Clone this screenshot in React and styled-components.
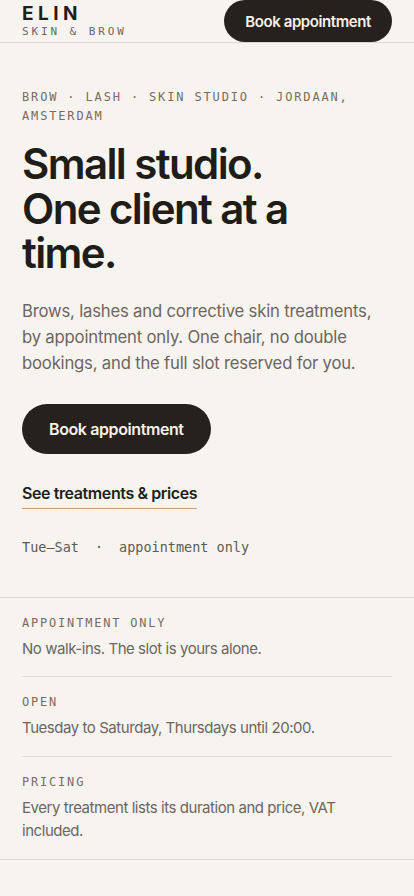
import React from 'react'
import styled, { createGlobalStyle } from 'styled-components'

const GlobalStyle = createGlobalStyle`
    * { box-sizing: border-box; }
    body {
        margin: 0;
        background: #f7f4ef;
        color: #221e1a;
        font-family: Inter, "Noto Sans", sans-serif;
        -webkit-font-smoothing: antialiased;
    }
`;

const mono = `"DejaVu Sans Mono", "Liberation Mono", monospace`;

function App() {
    const facts = [
        { label: 'Appointment only', text: 'No walk-ins. The slot is yours alone.' },
        { label: 'Open', text: 'Tuesday to Saturday, Thursdays until 20:00.' },
        { label: 'Pricing', text: 'Every treatment lists its duration and price, VAT included.' },
    ]

    return (
        <>
            <GlobalStyle />
            <Header>
                <Logo>
                    <span className="name">ELIN</span>
                    <span className="tag">SKIN &amp; BROW</span>
                </Logo>
                <PillButton $size="small">Book appointment</PillButton>
            </Header>
            <Hero>
                <Eyebrow>Brow · Lash · Skin studio · Jordaan, Amsterdam</Eyebrow>
                <Title>Small studio.<br />One client at a time.</Title>
                <Lead>
                    Brows, lashes and corrective skin treatments, by appointment only. One chair,
                    no double bookings, and the full slot reserved for you.
                </Lead>
                <Actions>
                    <PillButton $size="large">Book appointment</PillButton>
                    <TextLink href="#treatments">See treatments &amp; prices</TextLink>
                </Actions>
                <Meta>
                    <span>Tue–Sat</span>
                    <span>·</span>
                    <span>appointment only</span>
                </Meta>
            </Hero>
            <FactList>
                {facts.map(f => (
                    <Fact key={f.label}>
                        <FactLabel>{f.label}</FactLabel>
                        <FactText>{f.text}</FactText>
                    </Fact>
                ))}
            </FactList>
        </>
    )
}

const Header = styled.header`
    height: 43px;
    padding: 0 22px;
    display: flex;
    align-items: center;
    justify-content: space-between;
    border-bottom: 1px solid #ddd6cd;
`;

const Logo = styled.div`
    display: flex;
    flex-direction: column;
    .name{
        font-size: 19px;
        font-weight: 700;
        letter-spacing: 4.5px;
        line-height: 20px;
    }
    .tag{
        font-family: ${mono};
        font-size: 11px;
        letter-spacing: 2.9px;
        color: #6d655e;
        line-height: 14px;
        margin-top: 1px;
    }
`;

const PillButton = styled.button`
    border: none;
    background: #26211c;
    color: #f7f1e8;
    font-family: Inter, sans-serif;
    font-weight: 600;
    letter-spacing: -0.4px;
    border-radius: 999px;
    cursor: pointer;
    height: ${p => p.$size === 'large' ? '50px' : '42px'};
    padding: ${p => p.$size === 'large' ? '0 27px' : '0 21px'};
    font-size: ${p => p.$size === 'large' ? '16px' : '15px'};
    align-self: ${p => p.$size === 'large' ? 'flex-start' : 'center'};
`;

const Hero = styled.section`
    padding: 45px 22px 40px;
    display: flex;
    flex-direction: column;
`;

const Eyebrow = styled.p`
    margin: 0;
    font-family: ${mono};
    font-size: 12px;
    line-height: 19px;
    letter-spacing: 1.85px;
    text-transform: uppercase;
    color: #7a6a5f;
`;

const Title = styled.h1`
    margin: 16px 0 0;
    font-size: 42px;
    line-height: 44.5px;
    font-weight: 600;
    letter-spacing: -1.6px;
    color: #201c18;
    max-width: 300px;
`;

const Lead = styled.p`
    margin: 22px 0 0;
    max-width: 358px;
    font-size: 16.7px;
    line-height: 26px;
    color: #6d655f;
    letter-spacing: -0.2px;
`;

const Actions = styled.div`
    margin-top: 28px;
    display: flex;
    flex-direction: column;
    align-items: flex-start;
    gap: 28px;
`;

const TextLink = styled.a`
    color: #221e1a;
    text-decoration: none;
    font-size: 16px;
    font-weight: 600;
    letter-spacing: -0.4px;
    line-height: 22px;
    padding-bottom: 4px;
    border-bottom: 1px solid #c39f86;
`;

const Meta = styled.div`
    margin-top: 28px;
    display: flex;
    gap: 16px;
    font-family: ${mono};
    font-size: 13.5px;
    line-height: 20px;
    color: #5f5954;
`;

const FactList = styled.ul`
    list-style: none;
    margin: 0;
    padding: 0 22px;
    border-top: 1px solid #ddd6cd;
    border-bottom: 1px solid #ddd6cd;
`;

const Fact = styled.li`
    padding: 17px 0 16px;
    display: flex;
    flex-direction: column;
    gap: 6px;
    & + &{
        border-top: 1px solid #e2dcd4;
    }
`;

const FactLabel = styled.span`
    font-family: ${mono};
    font-size: 12px;
    line-height: 16px;
    letter-spacing: 1.8px;
    text-transform: uppercase;
    color: #7a6a5f;
`;

const FactText = styled.span`
    font-size: 15px;
    line-height: 23.5px;
    color: #6d655f;
    letter-spacing: -0.45px;
`;

export default App
